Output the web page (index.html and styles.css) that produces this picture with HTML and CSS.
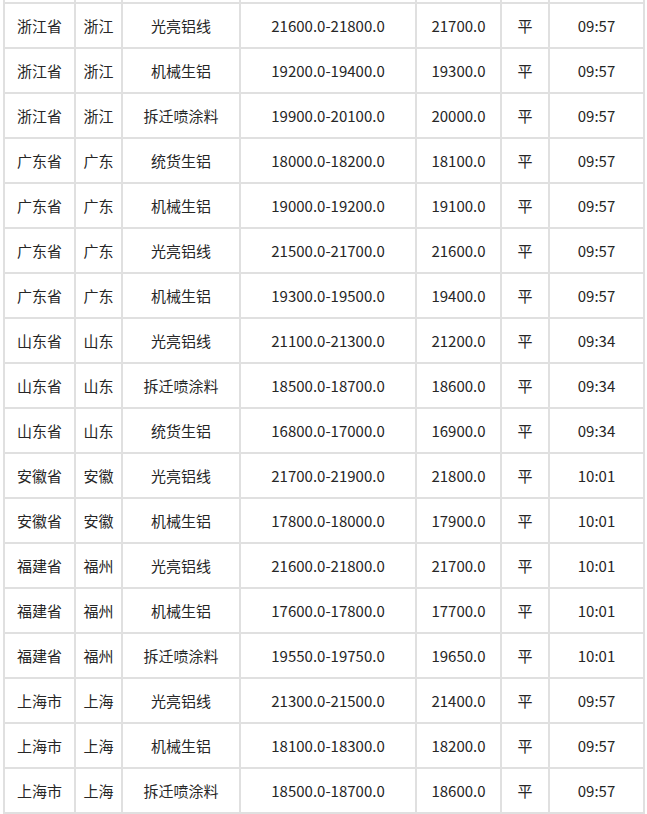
FILE: index.html
```html
<!DOCTYPE html>
<html lang="zh">
<head>
<meta charset="utf-8">
<title>铝价</title>
<link rel="stylesheet" href="styles.css">
</head>
<body>
<div class="wrap">
<table class="price">
<colgroup>
<col class="c1"><col class="c2"><col class="c3"><col class="c4"><col class="c5"><col class="c6"><col class="c7">
</colgroup>
<tbody>
<tr class="cut"><td></td><td></td><td></td><td></td><td></td><td></td><td></td></tr>
<tr><td>浙江省</td><td>浙江</td><td>光亮铝线</td><td>21600.0-21800.0</td><td>21700.0</td><td>平</td><td>09:57</td></tr>
<tr><td>浙江省</td><td>浙江</td><td>机械生铝</td><td>19200.0-19400.0</td><td>19300.0</td><td>平</td><td>09:57</td></tr>
<tr><td>浙江省</td><td>浙江</td><td>拆迁喷涂料</td><td>19900.0-20100.0</td><td>20000.0</td><td>平</td><td>09:57</td></tr>
<tr><td>广东省</td><td>广东</td><td>统货生铝</td><td>18000.0-18200.0</td><td>18100.0</td><td>平</td><td>09:57</td></tr>
<tr><td>广东省</td><td>广东</td><td>机械生铝</td><td>19000.0-19200.0</td><td>19100.0</td><td>平</td><td>09:57</td></tr>
<tr><td>广东省</td><td>广东</td><td>光亮铝线</td><td>21500.0-21700.0</td><td>21600.0</td><td>平</td><td>09:57</td></tr>
<tr><td>广东省</td><td>广东</td><td>机械生铝</td><td>19300.0-19500.0</td><td>19400.0</td><td>平</td><td>09:57</td></tr>
<tr><td>山东省</td><td>山东</td><td>光亮铝线</td><td>21100.0-21300.0</td><td>21200.0</td><td>平</td><td>09:34</td></tr>
<tr><td>山东省</td><td>山东</td><td>拆迁喷涂料</td><td>18500.0-18700.0</td><td>18600.0</td><td>平</td><td>09:34</td></tr>
<tr><td>山东省</td><td>山东</td><td>统货生铝</td><td>16800.0-17000.0</td><td>16900.0</td><td>平</td><td>09:34</td></tr>
<tr><td>安徽省</td><td>安徽</td><td>光亮铝线</td><td>21700.0-21900.0</td><td>21800.0</td><td>平</td><td>10:01</td></tr>
<tr><td>安徽省</td><td>安徽</td><td>机械生铝</td><td>17800.0-18000.0</td><td>17900.0</td><td>平</td><td>10:01</td></tr>
<tr><td>福建省</td><td>福州</td><td>光亮铝线</td><td>21600.0-21800.0</td><td>21700.0</td><td>平</td><td>10:01</td></tr>
<tr><td>福建省</td><td>福州</td><td>机械生铝</td><td>17600.0-17800.0</td><td>17700.0</td><td>平</td><td>10:01</td></tr>
<tr><td>福建省</td><td>福州</td><td>拆迁喷涂料</td><td>19550.0-19750.0</td><td>19650.0</td><td>平</td><td>10:01</td></tr>
<tr><td>上海市</td><td>上海</td><td>光亮铝线</td><td>21300.0-21500.0</td><td>21400.0</td><td>平</td><td>09:57</td></tr>
<tr><td>上海市</td><td>上海</td><td>机械生铝</td><td>18100.0-18300.0</td><td>18200.0</td><td>平</td><td>09:57</td></tr>
<tr><td>上海市</td><td>上海</td><td>拆迁喷涂料</td><td>18500.0-18700.0</td><td>18600.0</td><td>平</td><td>09:57</td></tr>
</tbody>
</table>
</div>
</body>
</html>
```

FILE: styles.css
```css
html, body {
  margin: 0;
  padding: 0;
  background: #ffffff;
}

.wrap {
  padding-left: 3px;
  overflow: hidden;
  height: 814px;
}

.price {
  border-collapse: collapse;
  table-layout: fixed;
  width: 642px;
  font-family: "Noto Sans CJK SC", "Noto Sans", sans-serif;
  font-size: 15px;
  color: #262626;
}

.c1 { width: 71px; }
.c2 { width: 47px; }
.c3 { width: 118px; }
.c4 { width: 176px; }
.c5 { width: 85px; }
.c6 { width: 48px; }
.c7 { width: 95px; }

.price td {
  border: 2px solid #e0e0e0;
  height: 42px;
  padding: 1px 0 0;
  text-align: center;
  vertical-align: middle;
  white-space: nowrap;
  line-height: 20px;
}

.price tr.cut td {
  border-top: none;
  height: 2px;
  padding: 0;
}
```
